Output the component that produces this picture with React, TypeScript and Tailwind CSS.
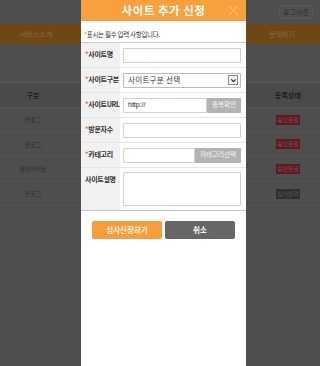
import { X } from "lucide-react";

const font = { fontFamily: '"Noto Sans CJK KR", "Noto Sans", sans-serif' };

const rows = [
  { type: "블로그", status: "승인완료", ok: true },
  { type: "블로그", status: "승인완료", ok: true },
  { type: "일반사이트", status: "승인완료", ok: true },
  { type: "블로그", status: "심사반려", ok: false },
];

function Label({ text, required }: { text: string; required?: boolean }) {
  return (
    <div className="w-[39px] shrink-0 bg-[#f1f1f1] pl-[4px] pt-[8px] text-[7px] font-bold leading-none tracking-[-0.3px] text-[#333]">
      {required && <span className="text-[#f0722f]">*</span>}
      {text}
    </div>
  );
}

function Row({ children, label, required }: { children: React.ReactNode; label: string; required?: boolean }) {
  return (
    <div className="flex h-[25px] border-b border-[#e6e6e6]">
      <Label text={label} required={required} />
      <div className="flex flex-1 items-center pl-[3px] pr-[5px]">{children}</div>
    </div>
  );
}

export default function App() {
  return (
    <div className="relative h-[366px] w-[320px] overflow-hidden bg-[#4e4e4e]" style={font}>
      {/* dimmed page behind */}
      <div className="flex h-[24px] items-center justify-end pr-[7px]">
        <div className="flex h-[14px] w-[34px] items-center justify-center border border-[#575757] bg-[#515151] text-[7px] text-[#2e2e2e]">로그아웃</div>
      </div>
      <div className="flex h-[20px] items-center justify-between bg-[#6f4714] pl-[20px] pr-[25px] text-[7px] text-[#8c6a45]">
        <span>서비스소개</span>
        <span>문의하기</span>
      </div>
      <div className="h-[39px] border-b border-[#5a5a5a]" />
      <div className="flex h-[25px] items-center justify-between border-b border-[#555] bg-[#4a4a4a] text-[7px] font-bold text-[#1e1e1e]">
        <span className="w-[66px] text-center">구분</span>
        <span className="w-[64px] text-center">등록상태</span>
      </div>
      {rows.map((r, i) => (
        <div key={i} className="flex h-[24.6px] items-center justify-between border-b border-[#555] text-[6px] text-[#2e2e2e]">
          <span className="w-[66px] text-center">{r.type}</span>
          <span className="flex w-[64px] justify-center">
            <span className={`px-[1px] py-[2px] leading-none ${r.ok ? "bg-[#5c1a22] text-[#8c4a52]" : "bg-[#2f2f2f] text-[#585858]"}`}>{r.status}</span>
          </span>
        </div>
      ))}

      {/* modal */}
      <div className="absolute left-[81px] top-0 flex h-full w-[165px] flex-col bg-white">
        <div className="relative flex h-[21px] items-center justify-center bg-[#f8a03e] text-[11.5px] font-semibold tracking-[0.5px] text-white">
          사이트 추가 신청
          <X className="absolute right-[5px] top-[3px] size-[15px] text-[#fde2c0]" strokeWidth={1.1} />
        </div>
        <div className="flex h-[22px] items-end border-b border-[#cfcfcf] pb-[5px] pl-[3px] text-[6.5px] leading-none tracking-[-0.3px] text-[#333]">
          <span className="text-[#f0722f]">*</span>표시는 필수 입력 사항입니다.
        </div>
        <Row label="사이트명" required>
          <div className="h-[15px] w-full rounded-[1px] border border-[#d0d0d0]" />
        </Row>
        <Row label="사이트구분" required>
          <div className="flex h-[15px] w-full items-center justify-between rounded-[1px] border border-[#bdbdbd] pl-[4px] pr-[2px] text-[7.5px] tracking-[0.3px] text-[#333]">
            사이트구분 선택
            <span className="flex h-[10px] w-[10px] items-center justify-center border border-[#8a8a8a] bg-[#f4f4f4]">
              <svg viewBox="0 0 8 8" className="size-[7px]"><path d="M1.5 2.8 L4 5.3 L6.5 2.8" fill="none" stroke="#222" strokeWidth="1.3" /></svg>
            </span>
          </div>
        </Row>
        <Row label="사이트URL" required>
          <div className="flex h-[15px] w-full">
            <div className="flex flex-1 items-center rounded-l-[1px] border border-[#d0d0d0] pl-[4px] text-[7px] text-[#222]" style={{ fontFamily: '"Liberation Sans", sans-serif' }}>http://</div>
            <div className="flex w-[34px] items-center justify-center bg-[#b3b3b3] text-[6.5px] text-[#f4f4f4]">중복확인</div>
          </div>
        </Row>
        <Row label="방문자수" required>
          <div className="h-[15px] w-full rounded-[1px] border border-[#d0d0d0]" />
        </Row>
        <Row label="카테고리" required>
          <div className="flex h-[15px] w-full">
            <div className="flex-1 rounded-l-[1px] border border-[#d0d0d0]" />
            <div className="flex w-[46px] items-center justify-center bg-[#b3b3b3] text-[6.5px] text-[#f4f4f4]">카테고리선택</div>
          </div>
        </Row>
        <div className="flex h-[43px] border-b border-[#c4c4c4]">
          <Label text="사이트설명" />
          <div className="flex flex-1 items-center pl-[3px] pr-[5px]">
            <div className="h-[34px] w-full rounded-[1px] border border-[#d0d0d0]" />
          </div>
        </div>
        <div className="flex justify-center gap-[3px] pt-[10px]">
          <button className="flex h-[18px] w-[70px] items-center justify-center rounded-[2px] bg-[#f79d3a] text-[7.5px] font-bold text-[#fff2e0]">심사신청하기</button>
          <button className="flex h-[18px] w-[70px] items-center justify-center rounded-[2px] bg-[#666] text-[7.5px] font-bold text-white">취소</button>
        </div>
      </div>
    </div>
  );
}
